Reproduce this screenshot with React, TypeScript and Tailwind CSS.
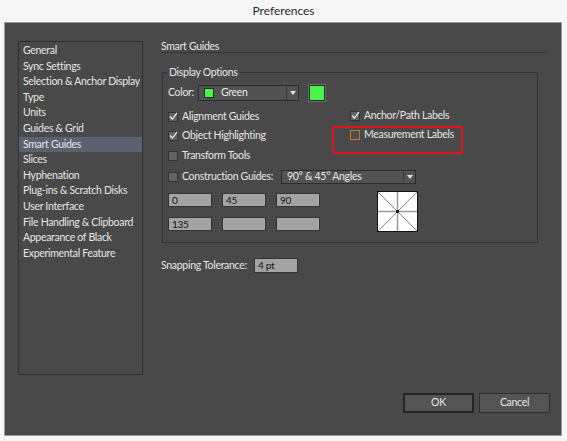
import React from "react";

const font = "font-['Lato','Liberation_Sans',sans-serif]";

const categories = [
  "General",
  "Sync Settings",
  "Selection & Anchor Display",
  "Type",
  "Units",
  "Guides & Grid",
  "Smart Guides",
  "Slices",
  "Hyphenation",
  "Plug-ins & Scratch Disks",
  "User Interface",
  "File Handling & Clipboard",
  "Appearance of Black",
  "Experimental Feature",
];

function Check({ checked, focus }: { checked?: boolean; focus?: boolean }) {
  return (
    <span
      className={`relative block w-[10px] h-[10px] shrink-0 border ${
        focus ? "border-[#c9742a] bg-[#4c4c4c]" : "border-[#333333] bg-[#636363]"
      }`}
    >
      {checked && (
        <svg viewBox="0 0 10 10" className="absolute left-0 -top-[1px] w-[9px] h-[9px]">
          <path d="M1 5 L3.8 7.8 L9 1" fill="none" stroke="#f0f0f0" strokeWidth="1.3" />
        </svg>
      )}
    </span>
  );
}

function CheckRow({ label, checked, focus }: { label: string; checked?: boolean; focus?: boolean }) {
  return (
    <div className="flex items-center gap-[4px] h-[19.5px] whitespace-nowrap">
      <Check checked={checked} focus={focus} />
      <span>{label}</span>
    </div>
  );
}

function Field({ value }: { value?: string }) {
  return (
    <div className="w-[44px] h-[14px] bg-[#a3a3a3] border border-[#353535] text-[#151515] text-[10px] leading-[12px] pl-[3px]">
      {value}
    </div>
  );
}

function Arrow() {
  return (
    <div className="w-[12px] h-full border-l border-[#3a3a3a] flex items-center justify-center">
      <svg viewBox="0 0 6 4" className="w-[6px] h-[4px]">
        <path d="M0 0 H6 L3 4 Z" fill="#e0e0e0" />
      </svg>
    </div>
  );
}

function AngleBox() {
  return (
    <svg viewBox="0 0 41 41" className="w-[41px] h-[41px]">
      <rect x="0.5" y="0.5" width="40" height="40" fill="#ffffff" stroke="#111" />
      <line x1="1" y1="1" x2="40" y2="40" stroke="#8a8a8a" strokeWidth="1" />
      <line x1="40" y1="1" x2="1" y2="40" stroke="#8a8a8a" strokeWidth="1" />
      <line x1="20.5" y1="1" x2="20.5" y2="40" stroke="#9a9a9a" strokeWidth="1.5" />
      <line x1="1" y1="20.5" x2="40" y2="20.5" stroke="#9a9a9a" strokeWidth="1.5" />
      <rect x="19" y="19" width="3" height="3" fill="#222" />
    </svg>
  );
}

export default function App() {
  return (
    <div className={`w-[567px] h-[441px] bg-[#f6f6f6] flex flex-col ${font} text-[10.5px] tracking-[-0.3px] text-[#e6e6e6]`}>
      <div className="h-[22px] flex items-center justify-center text-[12px] text-[#2a2a2a] tracking-normal">Preferences</div>

      <div className="ml-[4px] w-[558px] h-[414px] border border-[#9c9c9c] bg-[#494949] flex flex-col">
        <div className="flex pl-[13px] pt-[16px]">
          {/* category list */}
          <div className="mt-[2px] w-[125px] h-[334px] border border-[#2f2f2f] pt-[1px]">
            {categories.map((c) => (
              <div
                key={c}
                className={`h-[15.6px] leading-[15.6px] pl-[4px] whitespace-nowrap ${
                  c === "Smart Guides" ? "bg-[#5a6270]" : ""
                }`}
              >
                {c}
              </div>
            ))}
          </div>

          <div className="ml-[18px] w-[387px] flex flex-col">
            <div className="h-[14px] leading-[14px] border-b border-[#353535]">Smart Guides</div>

            {/* Display Options group */}
            <div className="relative mt-[19px] ml-[1px] w-[376px] h-[171px] border border-[#333333] px-[5px] pt-[12px]">
              <span className="absolute left-[4px] -top-[8px] px-[2px] bg-[#494949] leading-[14px]">Display Options</span>

              <div className="flex items-center h-[16px]">
                <span className="w-[30px]">Color:</span>
                <div className="flex items-center w-[101px] h-[16px] bg-[#525252] border border-[#2c2c2c]">
                  <span className="ml-[5px] w-[10px] h-[10px] bg-[#4cf24c] border border-[#2a2a2a]" />
                  <span className="ml-[7px] flex-1">Green</span>
                  <Arrow />
                </div>
                <span className="ml-[10px] w-[16px] h-[16px] bg-[#4cf24c] border border-[#2a2a2a] outline outline-1 outline-[#6a6a6a]" />
              </div>

              <div className="mt-[6px] grid grid-cols-[182px_1fr]">
                <div>
                  <CheckRow label="Alignment Guides" checked />
                  <CheckRow label="Object Highlighting" checked />
                  <CheckRow label="Transform Tools" />
                </div>
                <div className="-mt-[1px]">
                  <CheckRow label="Anchor/Path Labels" checked />
                  <div className="relative">
                    <CheckRow label="Measurement Labels" focus />
                    <span className="absolute -left-[18px] top-0 w-[131px] h-[28px] border-2 border-[#e0121c]" />
                  </div>
                </div>
              </div>

              <div className="mt-[4px] flex items-center h-[14px] whitespace-nowrap">
                <Check />
                <span className="ml-[4px] w-[99px]">Construction Guides:</span>
                <div className="flex items-center w-[135px] h-[14px] bg-[#525252] border border-[#2c2c2c]">
                  <span className="ml-[5px] flex-1">90° &amp; 45° Angles</span>
                  <Arrow />
                </div>
              </div>

              <div className="mt-[9px] flex">
                <div className="grid grid-cols-[44px_44px_44px] gap-x-[10px] gap-y-[10px] w-[152px]">
                  <Field value="0" />
                  <Field value="45" />
                  <Field value="90" />
                  <Field value="135" />
                  <Field />
                  <Field />
                </div>
                <div className="ml-[57px] -mt-[2px]">
                  <AngleBox />
                </div>
              </div>
            </div>

            <div className="mt-[15px] flex items-center h-[15px] whitespace-nowrap">
              <span className="w-[93px]">Snapping Tolerance:</span>
              <div className="w-[44px] h-[15px] bg-[#a3a3a3] border border-[#353535] text-[#151515] text-[10px] leading-[13px] pl-[3px]">4 pt</div>
            </div>
          </div>
        </div>

        <div className="mt-auto mb-[22px] mr-[11px] flex justify-end gap-[5px]">
          <div className="w-[71px] h-[20px] bg-[#545454] border-2 border-[#262626] flex items-center justify-center">OK</div>
          <div className="w-[71px] h-[20px] bg-[#545454] border border-[#2e2e2e] flex items-center justify-center">Cancel</div>
        </div>
      </div>
    </div>
  );
}
